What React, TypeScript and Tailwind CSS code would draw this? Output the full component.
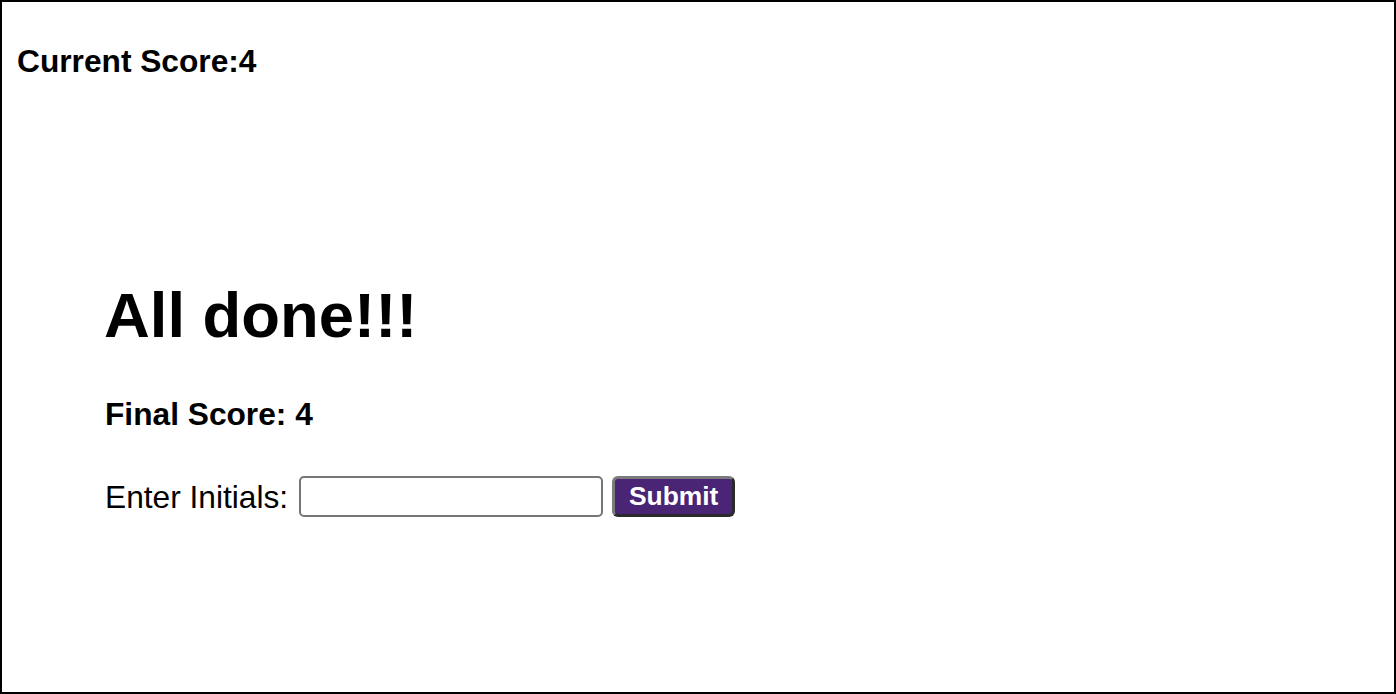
import React from "react";

export default function App() {
  return (
    <div
      className="w-[1396px] h-[694px] border-2 border-black bg-white text-black box-border overflow-hidden"
      style={{ fontFamily: '"Liberation Sans", Arial, sans-serif' }}
    >
      <div className="ml-[15px] mt-[41px] text-[31.7px] leading-[1.15] font-bold">
        Current Score:4
      </div>
      <div className="ml-[102px] mt-[200px]">
        <h1 className="text-[63.4px] leading-[1.15] font-bold">All done!!!</h1>
        <div className="mt-[44px] ml-[1px] text-[31.7px] leading-[1.15] font-bold">
          Final Score: 4
        </div>
        <div className="mt-[44px] ml-[1px] flex items-center h-[40px] text-[31.7px] leading-[1.15]">
          <label className="mr-[11px]">Enter Initials:</label>
          <input
            type="text"
            className="w-[304px] h-[41px] border-2 border-[#767676] rounded-[5px] bg-white outline-none"
          />
          <button
            className="ml-[9px] w-[123px] h-[41px] rounded-[6px] bg-[#4a2475] text-white font-bold text-[26.4px] leading-none border-[3px] border-t-[#7a7a7a] border-l-[#7a7a7a] border-r-[#2a2a2a] border-b-[#2a2a2a] flex items-center justify-center pb-[1px]"
          >
            Submit
          </button>
        </div>
      </div>
    </div>
  );
}
